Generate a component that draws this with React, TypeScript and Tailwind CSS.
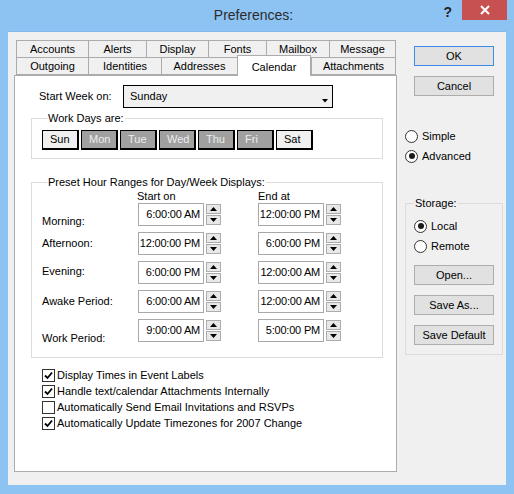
import React from "react";

const font = { fontFamily: '"Liberation Sans", Arial, sans-serif' };

const tabsTop = [
  { label: "Accounts", w: "w-[72px]" },
  { label: "Alerts", w: "w-[58px]" },
  { label: "Display", w: "w-[62px]" },
  { label: "Fonts", w: "w-[58px]" },
  { label: "Mailbox", w: "w-[63px]" },
  { label: "Message", w: "w-[67px]" },
];

const tabsBottom = [
  { label: "Outgoing", w: "w-[72px]" },
  { label: "Identities", w: "w-[73px]" },
  { label: "Addresses", w: "w-[76px]" },
  { label: "Calendar", w: "w-[74px]", active: true },
  { label: "Attachments", w: "w-[85px]" },
];

const days = [
  { label: "Sun", on: false },
  { label: "Mon", on: true },
  { label: "Tue", on: true },
  { label: "Wed", on: true },
  { label: "Thu", on: true },
  { label: "Fri", on: true },
  { label: "Sat", on: false },
];

const ranges = [
  { label: "Morning:", start: "6:00:00 AM", end: "12:00:00 PM", pad: "pt-[11px]" },
  { label: "Afternoon:", start: "12:00:00 PM", end: "6:00:00 PM", pad: "pt-[4px]" },
  { label: "Evening:", start: "6:00:00 PM", end: "12:00:00 AM", pad: "pt-[3px]" },
  { label: "Awake Period:", start: "6:00:00 AM", end: "12:00:00 AM", pad: "pt-[4px]" },
  { label: "Work Period:", start: "9:00:00 AM", end: "5:00:00 PM", pad: "pt-[12px]" },
];

const options = [
  { label: "Display Times in Event Labels", checked: true },
  { label: "Handle text/calendar Attachments Internally", checked: true },
  { label: "Automatically Send Email Invitations and RSVPs", checked: false },
  { label: "Automatically Update Timezones for 2007 Change", checked: true },
];

function Tab({ label, w, active }: { label: string; w: string; active?: boolean }) {
  if (active) {
    return (
      <div
        className={`${w} relative z-10 -mb-px flex h-[21px] items-start justify-center border border-b-0 border-[#acacac] bg-white pt-[3px] text-[11px] text-black`}
      >
        {label}
      </div>
    );
  }
  return (
    <div
      className={`${w} flex h-[18px] items-center justify-center border border-r-0 border-[#acacac] bg-[#f0f0f0] text-[11px] text-black last:border-r`}
    >
      {label}
    </div>
  );
}

function SpinArrow({ up }: { up?: boolean }) {
  return (
    <svg width="7" height="4" viewBox="0 0 7 4">
      {up ? <path d="M0 4 L3.5 0 L7 4 Z" fill="#000" /> : <path d="M0 0 L7 0 L3.5 4 Z" fill="#000" />}
    </svg>
  );
}

function TimeBox({ value }: { value: string }) {
  return (
    <div className="flex items-center gap-[2px]">
      <div className="flex h-[23px] w-[66px] items-center justify-end overflow-hidden whitespace-nowrap border border-[#a8a8a8] bg-white pr-[3px] text-[11px] tracking-[-0.2px]">
        {value}
      </div>
      <div className="flex h-[21px] w-[15px] flex-col gap-px">
        <div className="flex flex-1 items-center justify-center border border-[#acacac] bg-[#e8e8e8]">
          <SpinArrow up />
        </div>
        <div className="flex flex-1 items-center justify-center border border-[#acacac] bg-[#e8e8e8]">
          <SpinArrow />
        </div>
      </div>
    </div>
  );
}

function Radio({ label, checked }: { label: string; checked?: boolean }) {
  return (
    <div className="flex h-[20px] items-center gap-[4px] text-[11px]">
      <div className="flex h-[13px] w-[13px] items-center justify-center rounded-full border border-[#333] bg-white">
        {checked && <div className="h-[6px] w-[6px] rounded-full bg-[#1a1a1a]" />}
      </div>
      {label}
    </div>
  );
}

function Check({ label, checked }: { label: string; checked: boolean }) {
  return (
    <div className="flex h-[16px] items-center gap-[2px] text-[11px]">
      <div className="flex h-[13px] w-[13px] items-center justify-center border border-[#333] bg-white">
        {checked && (
          <svg width="9" height="9" viewBox="0 0 9 9">
            <path d="M1 4.5 L3.5 7 L8 1.5" fill="none" stroke="#000" strokeWidth="1.8" />
          </svg>
        )}
      </div>
      {label}
    </div>
  );
}

function Button({ label, primary }: { label: string; primary?: boolean }) {
  return (
    <div
      className={`flex h-[20px] w-[80px] items-center justify-center border bg-[#e1e1e1] text-[11px] ${
        primary ? "border-[#3c8ce8]" : "border-[#adadad]"
      }`}
    >
      {label}
    </div>
  );
}

export default function App() {
  return (
    <div className="flex h-[494px] w-[514px] flex-col bg-[#8dc3f3] text-black" style={font}>
      <div className="flex h-[31px] items-start">
        <div className="flex-1 basis-0" />
        <div className="pt-[5px] text-[14px] text-[#2b2b2b]">Preferences:</div>
        <div className="flex flex-1 basis-0 items-start justify-end pr-[7px]">
          <div className="pr-[10px] pt-[4px] text-[14px] font-bold leading-[16px] text-[#222]">?</div>
          <div className="flex h-[20px] w-[45px] items-center justify-center bg-[#c75050]">
            <svg width="10" height="10" viewBox="0 0 10 10">
              <path d="M1 1 L9 9 M9 1 L1 9" stroke="#fff" strokeWidth="2" />
            </svg>
          </div>
        </div>
      </div>

      <div className="mx-[8px] flex h-[454px] border-t border-[#83b8ec] bg-[#f0f0f0]">
        <div className="w-[389px] pl-[6px] pt-[8px]">
          <div className="flex pl-[2px]">
            {tabsTop.map((t) => (
              <Tab key={t.label} label={t.label} w={t.w} />
            ))}
          </div>
          <div className="-mt-px flex h-[18px] items-end pl-[2px]">
            {tabsBottom.map((t) => (
              <Tab key={t.label} label={t.label} w={t.w} active={t.active} />
            ))}
          </div>

          <div className="flex h-[397px] w-[383px] flex-col border border-[#acacac] bg-white text-[11px]">
            <div className="mt-[9px] flex items-center">
              <div className="w-[108px] pl-[24px]">Start Week on:</div>
              <div className="flex h-[23px] w-[210px] items-center justify-between border border-black bg-[#f0f0f0] pl-[6px] pr-[4px]">
                <span>Sunday</span>
                <svg width="6" height="4" viewBox="0 0 6 4" className="mt-[8px]">
                  <path d="M0 0 L6 0 L3 3.5 Z" fill="#000" />
                </svg>
              </div>
            </div>

            <fieldset className="ml-[16px] mt-[4px] w-[352px] border border-[#dcdcdc] pb-[8px] pl-[10px]">
              <legend className="ml-[5px] px-px leading-[13px]">Work Days are:</legend>
              <div className="flex gap-[2px] pt-[5px]">
                {days.map((d) => (
                  <div
                    key={d.label}
                    className={`flex h-[20px] w-[37px] items-center border border-b-2 border-r-2 border-black pl-[7px] ${
                      d.on ? "bg-[#a0a0a0] text-[#ececec]" : "bg-[#f0f0f0] text-black"
                    }`}
                  >
                    {d.label}
                  </div>
                ))}
              </div>
            </fieldset>

            <fieldset className="ml-[16px] mt-[17px] w-[352px] border border-[#dcdcdc] pb-[15px] pl-[10px]">
              <legend className="ml-[5px] px-px leading-[13px]">Preset Hour Ranges for Day/Week Displays:</legend>
              <div className="flex h-[14px] items-center pl-[95px] leading-[14px]">
                <div className="w-[121px]">Start on</div>
                <div>End at</div>
              </div>
              <div className="flex flex-col gap-[6px]">
                {ranges.map((r) => (
                  <div key={r.label} className="flex h-[23px] items-start">
                    <div className={`w-[96px] leading-[14px] ${r.pad}`}>{r.label}</div>
                    <TimeBox value={r.start} />
                    <div className="w-[37px]" />
                    <TimeBox value={r.end} />
                  </div>
                ))}
              </div>
            </fieldset>

            <div className="mt-[9px] flex flex-col pl-[27px]">
              {options.map((o) => (
                <Check key={o.label} label={o.label} checked={o.checked} />
              ))}
            </div>
          </div>
        </div>

        <div className="flex flex-1 flex-col">
          <div className="flex flex-col gap-[10px] pl-[17px] pt-[14px]">
            <Button label="OK" primary />
            <Button label="Cancel" />
          </div>
          <div className="mt-[30px] flex flex-col pl-[8px]">
            <Radio label="Simple" />
            <Radio label="Advanced" checked />
          </div>
          <fieldset className="ml-[8px] mt-[31px] w-[98px] border border-[#dcdcdc] pb-[9px] pl-[8px] text-[11px]">
            <legend className="px-px leading-[13px]">Storage:</legend>
            <div className="flex flex-col pt-[6px]">
              <Radio label="Local" checked />
              <Radio label="Remote" />
            </div>
            <div className="mt-[9px] flex flex-col gap-[10px]">
              <Button label="Open..." />
              <Button label="Save As..." />
              <Button label="Save Default" />
            </div>
          </fieldset>
        </div>
      </div>
    </div>
  );
}
